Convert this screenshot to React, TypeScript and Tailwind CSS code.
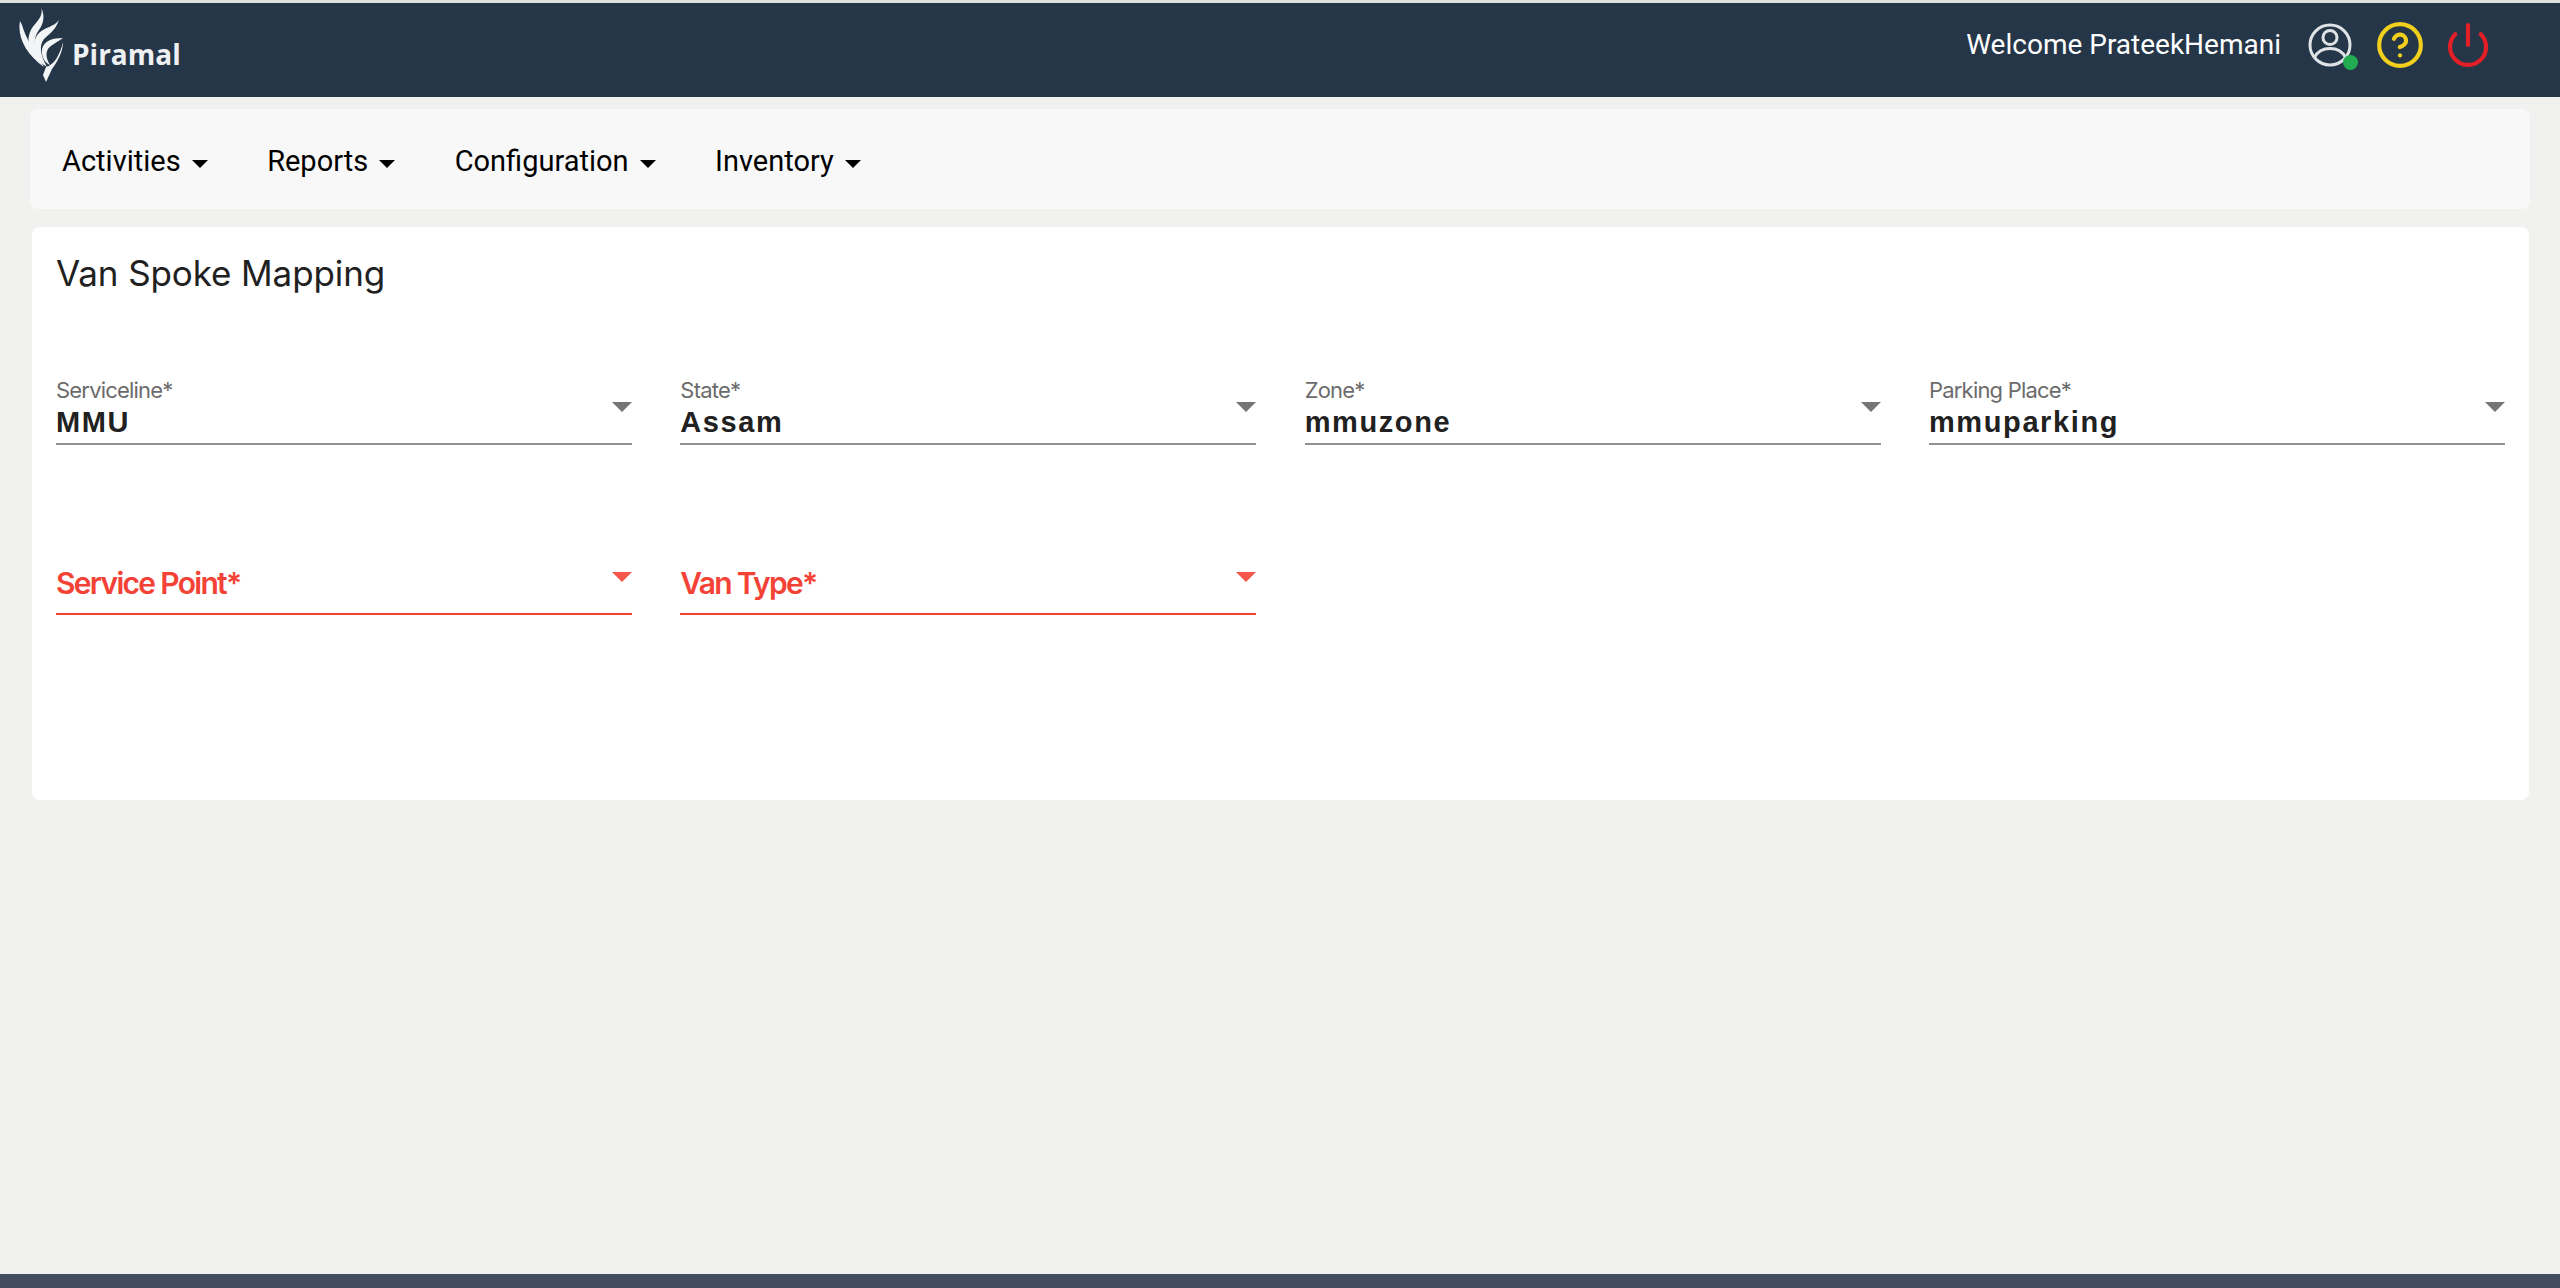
import { CircleHelp, Power } from "lucide-react";

const menus = ["Activities", "Reports", "Configuration", "Inventory"];

const filled = [
  { label: "Serviceline*", value: "MMU" },
  { label: "State*", value: "Assam" },
  { label: "Zone*", value: "mmuzone" },
  { label: "Parking Place*", value: "mmuparking" },
];

const required = ["Service Point*", "Van Type*"];

const Logo = () => (
  <div className="flex items-center">
    <svg viewBox="18 10 50 80" className="h-[80px] w-[50px] shrink-0 blur-[0.4px]" fill="#f2f4f5">
      <path d="M20 26C17 42 26 59 44 72C35 58 26 44 22 30Z" />
      <path d="M41.5 13C43 22 37 26 32 33C25 45 28 59 45 71C36 60 32 48 37 38C42 31 46 24 41.5 13Z" />
      <path d="M59 25C54 32 45 32 39 38C31 46 33 61 47 72C40 60 39 50 44 44C49 39 55 36 59 25Z" />
      <path d="M63 43C52 43 44 46 42 54C41 62 45 68 50 70C47 65 45 59 48 54C51 50 56 48 63 43Z" />
      <path d="M63 47C63 56 58 66 52 74L46 87L43 80L46 72C54 70 60 60 63 47Z" />
    </svg>
    <span className="ml-[4px] mt-[18px] font-['Open_Sans',sans-serif] text-[28px] leading-none font-bold text-[#eef0f2]">
      Piramal
    </span>
  </div>
);

const UserIcon = () => (
  <div className="relative h-[44px] w-[44px]">
    <svg viewBox="0 0 44 44" className="h-full w-full" fill="none" stroke="#dfe3e6" strokeWidth="3">
      <circle cx="22" cy="22" r="20" />
      <circle cx="22" cy="14.5" r="7" />
      <path d="M6.5 34.5C10 27.5 16 25.5 22 25.5C28 25.5 34 27.5 37.5 34.5" />
    </svg>
    <span className="absolute right-[-6px] bottom-[-3px] h-[15px] w-[15px] rounded-full bg-[#22ab4f]" />
  </div>
);

const Arrow = ({ color }: { color: string }) => (
  <span
    className={`absolute top-[30px] right-0 h-0 w-0 border-x-[10px] border-t-[10px] border-x-transparent ${color}`}
  />
);

const App = () => {
  return (
    <div className="flex min-h-[1288px] flex-col bg-[#f1f1ef] font-['Roboto',sans-serif]">
      <header className="mt-[3px] flex h-[94px] items-center justify-between bg-[#253648] pb-[10px] pl-[18px] pr-[68px] shadow-[0_-3px_0_#e0e0de]">
        <Logo />
        <div className="flex items-center">
          <span className="text-[28px] text-white">Welcome PrateekHemani</span>
          <div className="ml-[27px]">
            <UserIcon />
          </div>
          <CircleHelp size={50} strokeWidth={2} className="ml-[23px] text-[#f2cf1d]" />
          <Power size={48} strokeWidth={2.1} className="ml-[19px] text-[#e21f26]" />
        </div>
      </header>

      <nav className="mx-[30px] mt-[12px] flex h-[100px] items-center gap-[59.5px] rounded-[8px] bg-[#f8f8f8] pl-[32px] pt-[6px]">
        {menus.map((menu) => (
          <div key={menu} className="flex items-center gap-[11px] text-[29px] text-black">
            <span>{menu}</span>
            <span className="mt-[3px] h-0 w-0 border-x-[8px] border-t-[8px] border-x-transparent border-t-black" />
          </div>
        ))}
      </nav>

      <main className="ml-[32px] mr-[31px] mt-[18px] h-[573px] rounded-[8px] bg-white px-[24px] pt-[20px]">
        <h1 className="font-['Inter',sans-serif] text-[35px] leading-[52px] font-normal tracking-[-0.1px] text-[#212121]">
          Van Spoke Mapping
        </h1>

        <div className="mt-[73px] grid grid-cols-[repeat(4,576px)] gap-x-[48.33px] gap-y-[97px] font-['Inter',sans-serif]">
          {filled.map((field) => (
            <div key={field.label} className="relative flex h-[73px] flex-col justify-end border-b-2 border-[#919191]">
              <span className="mb-[3px] text-[22px] leading-[24px] tracking-[-0.8px] text-[#6b6b6b]">{field.label}</span>
              <span className="mb-[4px] font-['Liberation_Sans',sans-serif] text-[29px] leading-[34px] font-bold tracking-[1.6px] text-[#212121]">
                {field.value}
              </span>
              <Arrow color="border-t-[#757575]" />
            </div>
          ))}
          {required.map((label) => (
            <div key={label} className="relative flex h-[73px] flex-col justify-end border-b-2 border-[#f44336] pb-[12px]">
              <span className="text-[30px] leading-[36px] font-semibold tracking-[-1.7px] text-[#f44336]">{label}</span>
              <Arrow color="border-t-[#f5574c]" />
            </div>
          ))}
        </div>
      </main>

      <footer className="mt-auto h-[14px] bg-[#424d5f]" />
    </div>
  );
};

export default App;
